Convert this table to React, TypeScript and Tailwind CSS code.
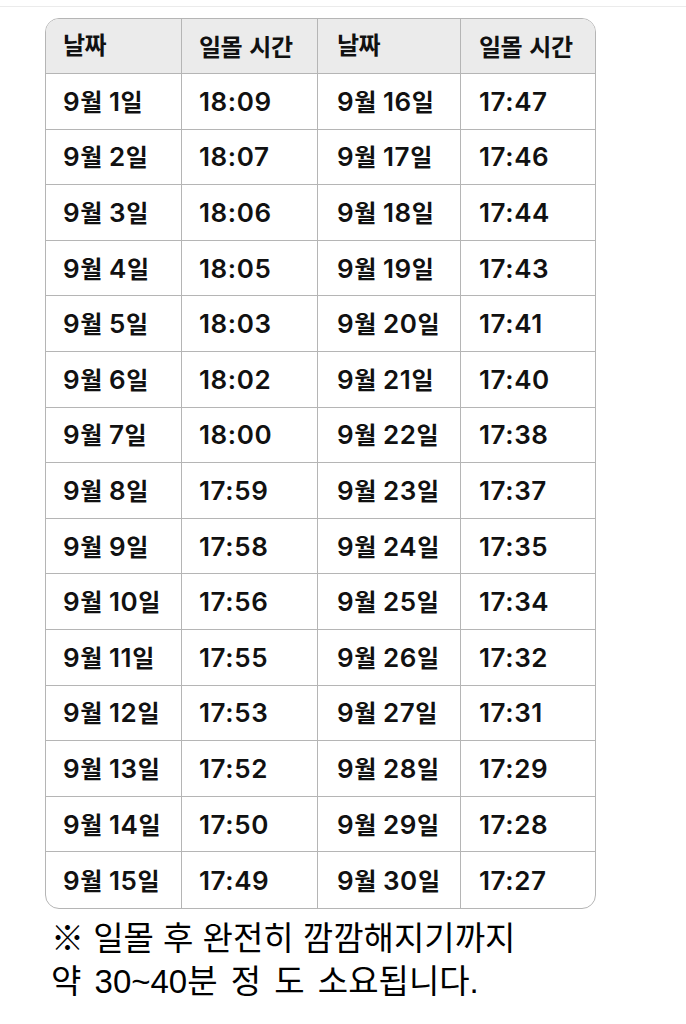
import React from "react";

const left = [
  ["9월 1일", "18:09"], ["9월 2일", "18:07"], ["9월 3일", "18:06"], ["9월 4일", "18:05"], ["9월 5일", "18:03"],
  ["9월 6일", "18:02"], ["9월 7일", "18:00"], ["9월 8일", "17:59"], ["9월 9일", "17:58"], ["9월 10일", "17:56"],
  ["9월 11일", "17:55"], ["9월 12일", "17:53"], ["9월 13일", "17:52"], ["9월 14일", "17:50"], ["9월 15일", "17:49"],
];
const right = [
  ["9월 16일", "17:47"], ["9월 17일", "17:46"], ["9월 18일", "17:44"], ["9월 19일", "17:43"], ["9월 20일", "17:41"],
  ["9월 21일", "17:40"], ["9월 22일", "17:38"], ["9월 23일", "17:37"], ["9월 24일", "17:35"], ["9월 25일", "17:34"],
  ["9월 26일", "17:32"], ["9월 27일", "17:31"], ["9월 28일", "17:29"], ["9월 29일", "17:28"], ["9월 30일", "17:27"],
];

function splitRuns(s: string) {
  const runs: { k: boolean; t: string }[] = [];
  for (const ch of s) {
    const k = /[\u3131-\uD79D\u203B]/.test(ch);
    const last = runs[runs.length - 1];
    if (last && last.k === k) last.t += ch;
    else runs.push({ k, t: ch });
  }
  return runs;
}

function CellText({ s }: { s: string }) {
  return (
    <span>
      {splitRuns(s).map((r, i) =>
        r.k ? (
          <span key={i} className="text-[24px] tracking-[-0.5px]">{r.t}</span>
        ) : (
          <span key={i} className="text-[26px] tracking-[0.6px]">{r.t}</span>
        )
      )}
    </span>
  );
}

const cell = "flex items-center border-r border-[#b5b5b5] last:border-r-0 whitespace-nowrap";
const cols = "grid grid-cols-[136px_136px_143px_134px]";

export default function App() {
  return (
    <div className="w-[686px] h-[1024px] bg-white overflow-hidden">
      <div className="h-[6px]" />
      <div className="border-t border-[#ebebeb] pt-[11px]">
        <div
          className="ml-[45px] w-[551px] border border-[#b5b5b5] rounded-[14px] overflow-hidden font-semibold text-[#111]"
          style={{ fontFamily: 'Inter, "Noto Sans CJK KR", sans-serif' }}
        >
          <div className={cols + " h-[55px] bg-[#ebebeb] border-b border-[#b5b5b5]"}>
            <div className={cell + " pl-[17px]"}><CellText s="날짜" /></div>
            <div className={cell + " pl-[17px]"}><CellText s="일몰 시간" /></div>
            <div className={cell + " pl-[19px]"}><CellText s="날짜" /></div>
            <div className={cell + " pl-[18px]"}><CellText s="일몰 시간" /></div>
          </div>
          {left.map((l, i) => (
            <div key={i} className={cols + " h-[55.6px] border-b border-[#b5b5b5] last:border-b-0"}>
              <div className={cell + " pl-[17px]"}><CellText s={l[0]} /></div>
              <div className={cell + " pl-[17px]"}><CellText s={l[1]} /></div>
              <div className={cell + " pl-[19px]"}><CellText s={right[i][0]} /></div>
              <div className={cell + " pl-[18px]"}><CellText s={right[i][1]} /></div>
            </div>
          ))}
        </div>
        <div
          className="pl-[51px] pt-[8px] text-[33px] leading-[43px] text-black whitespace-nowrap"
          style={{ fontFamily: '"Liberation Sans", "Noto Sans CJK KR", sans-serif' }}
        >
          <div>※ 일몰 후 완전히 깜깜해지기까지</div>
          <div className="[word-spacing:4px]">약 30~40분 정 도 소요됩니다.</div>
        </div>
      </div>
    </div>
  );
}
